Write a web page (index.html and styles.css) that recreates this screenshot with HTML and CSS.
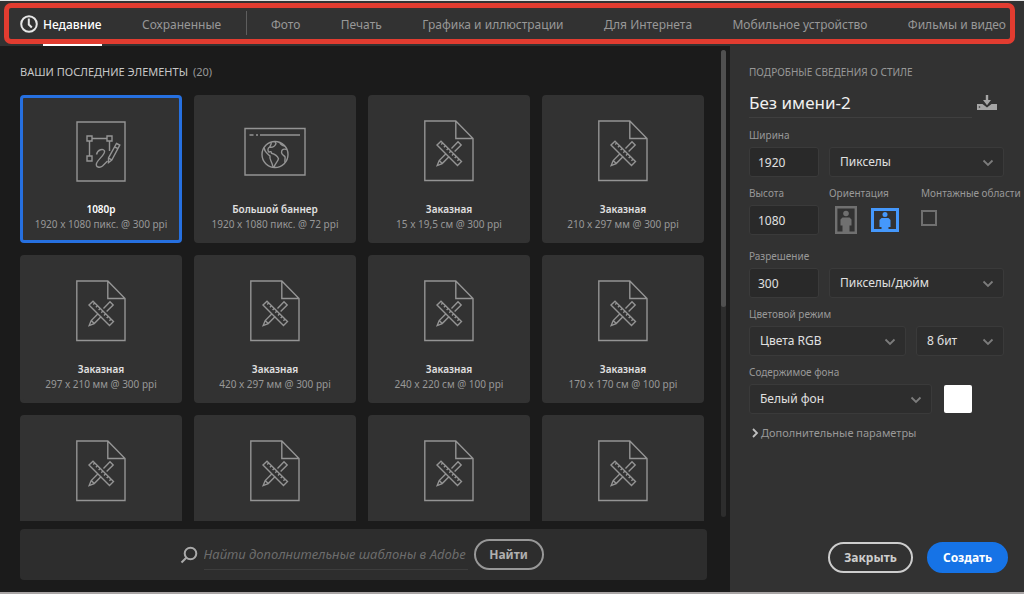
FILE: index.html
```html
<!DOCTYPE html>
<html lang="ru">
<head>
<meta charset="utf-8">
<meta name="viewport" content="width=device-width, initial-scale=1">
<title>Новый документ</title>
<link rel="stylesheet" href="styles.css">
</head>
<body>
<svg class="sprite" aria-hidden="true">
  <symbol id="doc" viewBox="0 0 50 62">
    <path d="M.8 1h31L49 18.500V60.500H.8z M31.800 1v17.500H49"/>
    <path d="M13 25 17 21.200 37.500 41.500 33.500 45.500z"/>
    <path d="M18.800 23l-1.600 1.600M21.500 25.700l-1.600 1.600M24.200 28.400l-1.600 1.600M26.900 31.100l-1.600 1.600M29.600 33.800l-1.600 1.600M32.300 36.500l-1.600 1.600M35 39.200l-1.600 1.600"/>
    <path d="M27.500 28.500 34 21.800l3.200 3.200-6.600 6.600M22 33.800l-6.800 6.800-2 5 5-2 7-7M15.200 40.600l3 3M13.800 44.800l.8.800"/>
  </symbol>
  <symbol id="chevron" viewBox="0 0 12 8"><path d="M1.500 1.500 6 6l4.500-4.500"/></symbol>
</svg>
<div class="app">
  <header class="topbar">
    <nav class="tabs" aria-label="Категории">
      <a class="tab tab-active" href="#recent">
        <svg class="clock" viewBox="0 0 18 18" aria-hidden="true"><circle cx="9" cy="9" r="7.800"/><path d="M8.800 3.500V9.500l3 3"/></svg>
        <span class="tab-text">Недавние</span>
      </a>
      <a class="tab" href="#saved">Сохраненные</a>
      <span class="tab-divider"></span>
      <a class="tab" href="#photo">Фото</a>
      <a class="tab" href="#print">Печать</a>
      <a class="tab" href="#art">Графика и иллюстрации</a>
      <a class="tab" href="#web">Для Интернета</a>
      <a class="tab" href="#mobile">Мобильное устройство</a>
      <a class="tab" href="#film">Фильмы и видео</a>
    </nav>
    <div class="highlight"></div>
  </header>
  <div class="body">
    <main class="gallery">
      <h1 class="gallery-title">ВАШИ ПОСЛЕДНИЕ ЭЛЕМЕНТЫ <span class="count">(20)</span></h1>
      <div class="scroller">
        <div class="cards">
          <button class="card card-selected" type="button">
            <svg class="art" viewBox="0 0 50 62" aria-hidden="true">
              <path d="M1 2h48v59H1z"/>
              <path d="M11 16h5v5h-5zM31 16h5v5h-5zM11 36h5v5h-5zM16 18.500h15M13.500 21v15M33.500 21v10"/>
              <path d="M20.500 34.500c1-5 7-6.500 8-3.500 1 3.500-6.500 8-8 12.500-1.200 4 3.500 4.500 6 2.500l5-5"/>
              <path d="M40.500 23.500l3.300 1.500-8 15-3.300 2.500v-4.500zM32.500 38l3.200 1.800M38.800 27l3.200 1.600"/>
            </svg>
            <span class="card-name">1080p</span><span class="card-size">1920 x 1080 пикс. @ 300 ppi</span>
          </button>
          <button class="card" type="button">
            <svg class="art art-wide" viewBox="0 0 62 62" aria-hidden="true">
              <path d="M1 8.500h60V55H1zM5.500 15h4M12 15h2M16 15h40"/>
              <circle cx="31" cy="34.500" r="13"/>
              <path d="M27 22.200c1 2-1 3.500-1.500 5 3 .5 5.500-1.500 6.500-3.500l-1-2M25.500 27.200c-2 1-2 3.500-.5 5 1.500-1 2.500-.5 2.500 1 3 .8 6 2.800 7 5.500-.5 2.800-3.500 4.500-4.500 8.500M20 27.500c.5 5 4 6.500 6 8.500-1 3.500 2 5 3 11M43 29.500c-3-1-5.500 0-5.500 2.800 0 3 2.500 2.700 3.500 4.500.5 1.500-.5 3.500 0 5.500M36 22.500c.5 2.500 2.500 3 5 3.500"/>
            </svg>
            <span class="card-name">Большой баннер</span><span class="card-size">1920 x 1080 пикс. @ 72 ppi</span>
          </button>
          <button class="card" type="button"><svg class="art" aria-hidden="true"><use href="#doc"/></svg><span class="card-name">Заказная</span><span class="card-size">15 x 19,5 см @ 300 ppi</span></button>
          <button class="card" type="button"><svg class="art" aria-hidden="true"><use href="#doc"/></svg><span class="card-name">Заказная</span><span class="card-size">210 x 297 мм @ 300 ppi</span></button>
          <button class="card" type="button"><svg class="art" aria-hidden="true"><use href="#doc"/></svg><span class="card-name">Заказная</span><span class="card-size">297 x 210 мм @ 300 ppi</span></button>
          <button class="card" type="button"><svg class="art" aria-hidden="true"><use href="#doc"/></svg><span class="card-name">Заказная</span><span class="card-size">420 x 297 мм @ 300 ppi</span></button>
          <button class="card" type="button"><svg class="art" aria-hidden="true"><use href="#doc"/></svg><span class="card-name">Заказная</span><span class="card-size">240 x 220 см @ 100 ppi</span></button>
          <button class="card" type="button"><svg class="art" aria-hidden="true"><use href="#doc"/></svg><span class="card-name">Заказная</span><span class="card-size">170 x 170 см @ 100 ppi</span></button>
          <button class="card" type="button" aria-label="Заказная"><svg class="art" aria-hidden="true"><use href="#doc"/></svg></button>
          <button class="card" type="button" aria-label="Заказная"><svg class="art" aria-hidden="true"><use href="#doc"/></svg></button>
          <button class="card" type="button" aria-label="Заказная"><svg class="art" aria-hidden="true"><use href="#doc"/></svg></button>
          <button class="card" type="button" aria-label="Заказная"><svg class="art" aria-hidden="true"><use href="#doc"/></svg></button>
        </div>
      </div>
      <form class="search">
        <svg class="loupe" viewBox="0 0 18 18" aria-hidden="true"><circle cx="10.500" cy="7.500" r="5.800"/><path d="M6.300 11.700 1.500 16.500"/></svg>
        <input class="search-input" type="text" aria-label="Найти шаблоны" placeholder="Найти дополнительные шаблоны в Adobe">
        <button class="pill pill-find" type="button">Найти</button>
      </form>
      <div class="track"><div class="thumb"></div></div>
    </main>
    <aside class="panel">
      <h2 class="panel-title">ПОДРОБНЫЕ СВЕДЕНИЯ О СТИЛЕ</h2>
      <div class="name-row">
        <input class="name-input" type="text" aria-label="Имя документа" value="Без имени-2">
        <button class="save" type="button" aria-label="Сохранить стиль">
          <svg viewBox="0 0 20 16" aria-hidden="true"><path d="M0 9h5.500l4.500 3.500L14.500 9H20v6H0z"/><path d="M8.800 0h2.400v5H14l-4 5.200L6 5h2.800z"/><circle class="save-dot" cx="2.500" cy="12" r=".8"/></svg>
        </button>
      </div>
      <div class="field">
        <label class="label" for="w">Ширина</label>
        <div class="row">
          <input class="box number" id="w" type="text" value="1920">
          <div class="pick pick-grow"><select class="box select" aria-label="Единицы"><option>Пикселы</option></select><svg class="chevron"><use href="#chevron"/></svg></div>
        </div>
      </div>
      <div class="row row-size">
        <div class="field">
          <label class="label" for="h">Высота</label>
          <input class="box number" id="h" type="text" value="1080">
        </div>
        <div class="field orient">
          <span class="label" id="orient">Ориентация</span>
          <div class="orient-buttons" role="group" aria-labelledby="orient">
            <button class="orient-btn" type="button" aria-label="Книжная"><svg width="22" height="28" viewBox="0 0 22 28" aria-hidden="true"><path class="frame" d="M1.200 1.200h19.600v25.600H1.200z"/><circle cx="11" cy="7.500" r="2.800"/><path d="M7.500 11.500h7l2 2v6h-2V26h-7v-6.500h-2v-6z"/></svg></button>
            <button class="orient-btn orient-on" type="button" aria-label="Альбомная"><svg width="28" height="24" viewBox="0 0 28 24" aria-hidden="true"><path class="frame" d="M1.500 1.500h25v21h-25z"/><circle cx="14" cy="6.500" r="2.500"/><path d="M10.500 10h7l2 2v7h-2v4h-7v-4h-2v-7z"/></svg></button>
          </div>
        </div>
        <div class="field">
          <label class="label" for="boards">Монтажные области</label>
          <input class="check" id="boards" type="checkbox">
        </div>
      </div>
      <div class="field field-res">
        <label class="label" for="res">Разрешение</label>
        <div class="row">
          <input class="box number" id="res" type="text" value="300">
          <div class="pick pick-grow"><select class="box select" aria-label="Единицы разрешения"><option>Пикселы/дюйм</option></select><svg class="chevron"><use href="#chevron"/></svg></div>
        </div>
      </div>
      <div class="field">
        <label class="label" for="mode">Цветовой режим</label>
        <div class="row">
          <div class="pick pick-grow"><select class="box select" id="mode"><option>Цвета RGB</option></select><svg class="chevron"><use href="#chevron"/></svg></div>
          <div class="pick pick-depth"><select class="box select" aria-label="Глубина"><option>8 бит</option></select><svg class="chevron"><use href="#chevron"/></svg></div>
        </div>
      </div>
      <div class="field">
        <label class="label" for="bg">Содержимое фона</label>
        <div class="row row-bg">
          <div class="pick pick-grow"><select class="box select" id="bg"><option>Белый фон</option></select><svg class="chevron"><use href="#chevron"/></svg></div>
          <button class="swatch" type="button" aria-label="Цвет фона"></button>
        </div>
      </div>
      <button class="more" type="button"><svg class="more-arrow" viewBox="0 0 8 10" aria-hidden="true"><path d="M2 1l4 4-4 4"/></svg>Дополнительные параметры</button>
      <div class="actions">
        <button class="pill pill-close" type="button">Закрыть</button>
        <button class="pill pill-create" type="button">Создать</button>
      </div>
    </aside>
  </div>
</div>
</body>
</html>
```
FILE: styles.css
```css
* { box-sizing: border-box; }
body {
  margin: 0;
  background: #1b1b1b;
  color: #989898;
  font: 11px/16px "Noto Sans", "Open Sans", sans-serif;
}
button, input, select { font: inherit; color: inherit; margin: 0; }
button { background: none; border: 0; padding: 0; }
svg { fill: none; stroke: currentColor; }
.sprite { position: absolute; width: 0; height: 0; }
.app {
  display: flex;
  flex-direction: column;
  height: 100vh;
  min-height: 560px;
  border-top: 1px solid #e4e4e4;
  border-bottom: 2px solid #a9a5a5;
}

.topbar { position: relative; background: #323232; height: 45px; flex: none; }
.tabs {
  display: flex;
  justify-content: space-between;
  height: 100%;
  padding: 0 18px 0 20px;
  font-size: 12px;
}
.tab {
  display: flex;
  align-items: center;
  gap: 5px;
  padding-top: 2px;
  color: #989898;
  text-decoration: none;
  white-space: nowrap;
}
.tab-active { position: relative; z-index: 1; padding-top: 0; color: #fff; }
.tab-text { display: flex; align-items: center; height: 100%; padding-top: 2px; border-bottom: 2px solid #fff; border-top: 2px solid transparent; font-weight: 500; }
.clock { width: 18px; height: 18px; stroke: #e6e6e6; stroke-width: 2; }
.tab-divider { width: 1px; height: 24px; margin: 10px -16px 0; background: #5e5e5e; }
.highlight {
  position: absolute;
  inset: 2px 9px 2px 4px;
  border: 5px solid #e23c30;
  border-radius: 7px;
  pointer-events: none;
}

.body { display: grid; grid-template-columns: minmax(0, 1fr) 294px; flex: 1; min-height: 0; }
.gallery {
  position: relative;
  display: flex;
  flex-direction: column;
  min-width: 0;
  min-height: 0;
  padding: 18px 23px 12px 20px;
}
.gallery-title { margin: 0 0 15px; font-size: 11px; font-weight: 400; color: #c8c8c8; }
.count { margin-left: 2px; color: #989898; }
.scroller { flex: 1; min-height: 0; overflow: hidden; padding-right: 3px; }
.cards { display: grid; grid-template-columns: repeat(4, minmax(0, 1fr)); grid-auto-rows: 148px; gap: 12px; }
.card {
  display: flex;
  flex-direction: column;
  align-items: center;
  padding-top: 22px;
  border: 3px solid #323232;
  border-radius: 4px;
  background: #323232;
  font-size: 10px;
  line-height: 15px;
  white-space: nowrap;
}
.card-selected { border-color: #2670e0; }
.art { width: 50px; height: 62px; margin-bottom: 20px; stroke: #949494; stroke-width: 1.4; }
.art-wide { width: 62px; }
.card-name { color: #e0e0e0; font-weight: 600; }
.card-selected .card-name { color: #fff; }
.track { position: absolute; top: 4px; bottom: 75px; right: 4px; width: 5px; border-radius: 3px; background: #2d2d2d; }
.thumb { height: 55%; border-radius: 3px; background: #505050; }

.search {
  display: flex;
  align-items: center;
  justify-content: center;
  flex: none;
  height: 51px;
  margin-top: 8px;
  padding: 0 24px 0 20px;
  border-radius: 4px;
  background: #2d2d2d;
}
.loupe { width: 18px; height: 18px; margin-right: 6px; stroke: #aaa; stroke-width: 2; }
.search-input {
  width: 264px;
  height: 30px;
  padding: 0;
  border: 0;
  border-bottom: 1px solid #3d3d3d;
  background: none;
  font-size: 13px;
  font-style: italic;
}
.search-input::placeholder { color: #6c6c6c; }
.pill { height: 31px; border: 2px solid; border-radius: 16px; font-size: 12px; font-weight: 700; white-space: nowrap; }
.pill-find { width: 70px; margin-left: 6px; border-color: #989898; color: #b0b0b0; }

.panel {
  display: flex;
  flex-direction: column;
  gap: 8px;
  min-height: 0;
  padding: 18px 20px 19px 19px;
  background: #323232;
}
.panel-title { margin: 0; font-size: 10px; line-height: 16px; font-weight: 400; white-space: nowrap; }
.name-row { display: flex; align-items: center; gap: 5px; height: 30px; margin-bottom: 1px; }
.name-input {
  flex: 1;
  min-width: 0;
  height: 30px;
  padding: 0;
  border: 0;
  border-bottom: 1px solid #3f3f3f;
  background: none;
  color: #f0f0f0;
  font-size: 17px;
}
.save { width: 20px; height: 16px; margin-right: 7px; }
.save svg { display: block; width: 20px; height: 16px; fill: #a5a5a5; stroke: none; }
.save .save-dot { fill: #323232; }
.field { display: flex; flex-direction: column; gap: 4px; }
.field-res { margin-top: 5px; }
.label { font-size: 10px; line-height: 16px; white-space: nowrap; }
.row { display: flex; gap: 10px; }
.row-size { margin-right: -20px; }
.row-bg { gap: 12px; align-items: center; padding-right: 32px; }
.box {
  height: 30px;
  border: 1px solid #3a3a3a;
  border-radius: 3px;
  background: #2d2d2d;
  color: #e0e0e0;
  font-size: 12px;
}
.number { width: 70px; padding: 0 8px; background: #292929; }
.pick { position: relative; min-width: 0; }
.pick-grow { flex: 1; }
.pick-depth { width: 88px; }
.select { display: block; width: 100%; padding: 0 28px 0 10px; appearance: none; }
.row .pick .chevron { position: absolute; right: 10px; top: 12px; width: 12px; height: 8px; stroke: #7c7c7c; stroke-width: 1.8; pointer-events: none; }
.orient { width: 82px; }
.orient-buttons { display: flex; align-items: center; gap: 14px; height: 30px; padding-left: 6px; }
.orient-btn { color: #707070; }
.orient-btn svg { display: block; fill: currentColor; stroke: none; }
.orient-btn .frame { fill: none; stroke: currentColor; stroke-width: 2.4; }
.orient-on { color: #4598fb; }
.orient-on .frame { stroke-width: 3; }
.check { appearance: none; width: 16px; height: 16px; margin: 5px 0; border: 2px solid #707070; }
.swatch { width: 28px; height: 28px; border-radius: 2px; background: #fff; }
.more { display: flex; align-items: center; gap: 2px; align-self: flex-start; margin-top: 3px; padding-left: 2px; white-space: nowrap; }
.more-arrow { width: 8px; height: 10px; stroke: #c0c0c0; stroke-width: 1.8; }
.actions { display: flex; justify-content: flex-end; gap: 14px; margin-top: auto; margin-right: -4px; }
.pill-close { width: 85px; border-color: #cdcdcd; color: #cdcdcd; }
.pill-create { width: 81px; border-color: #1673e6; background: #1673e6; color: #fff; }
```
